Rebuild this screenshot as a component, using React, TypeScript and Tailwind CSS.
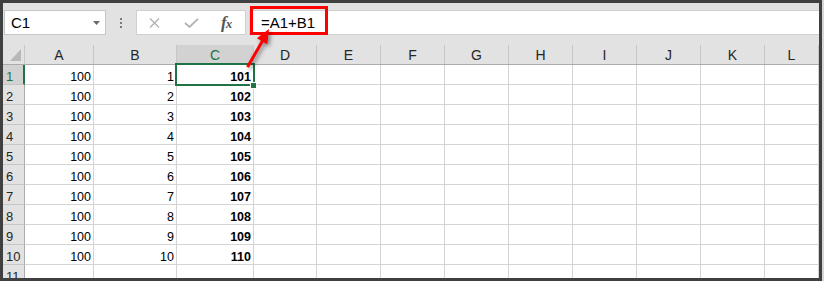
import React from 'react';

const cols = [
  { key: 'A', w: 'w-[69px]' },
  { key: 'B', w: 'w-[83px]' },
  { key: 'C', w: 'w-[77px]' },
  { key: 'D', w: 'w-[63px]' },
  { key: 'E', w: 'w-[64px]' },
  { key: 'F', w: 'w-[64px]' },
  { key: 'G', w: 'w-[64px]' },
  { key: 'H', w: 'w-[64px]' },
  { key: 'I', w: 'w-[64px]' },
  { key: 'J', w: 'w-[64px]' },
  { key: 'K', w: 'w-[64px]' },
  { key: 'L', w: 'flex-1' },
];

const font = "font-['Liberation_Sans',Arial,sans-serif]";

const cellValue = (row: number, col: string) => {
  if (row > 10) return '';
  if (col === 'A') return '100';
  if (col === 'B') return String(row);
  if (col === 'C') return String(100 + row);
  return '';
};

const App = () => {
  const rows = Array.from({ length: 11 }, (_, i) => i + 1);

  return (
    <div className={`flex w-[824px] h-[281px] bg-[#d6d6d6] ${font}`}>
      <div className="relative flex flex-col w-[822px] h-[281px] border-[3px] border-[#404040] bg-[#e2e2e2] overflow-hidden">
        {/* Formula bar */}
        <div className="flex items-end h-[32px] shrink-0 pl-px">
          <div className="flex items-center justify-between w-[102px] h-[25px] bg-white border border-[#c6c6c6] pl-[6px] pr-[5px]">
            <span className="text-[15px] text-black leading-none">C1</span>
            <svg width="7" height="4" viewBox="0 0 7 4">
              <polygon points="0,0 7,0 3.5,4" fill="#6a6a6a" />
            </svg>
          </div>
          <div className="flex flex-col items-center justify-center gap-[2px] w-[30px] h-[25px]">
            <span className="w-[2px] h-[2px] bg-[#7a7a7a]" />
            <span className="w-[2px] h-[2px] bg-[#7a7a7a]" />
            <span className="w-[2px] h-[2px] bg-[#7a7a7a]" />
          </div>
          <div className="flex items-center w-[110px] h-[25px] bg-white border border-[#d0d0d0] pl-[12px]">
            <svg width="11" height="10" viewBox="0 0 11 10">
              <path d="M1 0.5 L10 9.5 M10 0.5 L1 9.5" stroke="#b3b3b3" strokeWidth="1.4" fill="none" />
            </svg>
            <svg className="ml-[24px]" width="15" height="10" viewBox="0 0 15 10">
              <path d="M1 5 L5.5 9 L14 0.8" stroke="#b3b3b3" strokeWidth="1.8" fill="none" />
            </svg>
            <span className="ml-[22px] text-[17px] leading-none italic font-bold text-[#555555] font-['Liberation_Serif',serif] tracking-[-1px]">
              f<span className="text-[13px]">x</span>
            </span>
          </div>
          <div className="flex items-center flex-1 h-[25px] ml-[3px] bg-white border border-[#d0d0d0] border-r-0 pl-[11px]">
            <span className="text-[15px] text-black leading-none">=A1+B1</span>
          </div>
        </div>

        <div className="h-[10px] shrink-0" />

        {/* Column headers */}
        <div className="flex h-[20px] shrink-0 border-b border-[#ababab]">
          <div className="w-[22px] h-full border-r border-[#c6c6c6]">
            <svg width="21" height="19" viewBox="0 0 21 19">
              <polygon points="18,4 18,16 7,16" fill="#b8b8b8" />
            </svg>
          </div>
          {cols.map((c) => (
            <div
              key={c.key}
              className={`${c.w} h-full border-r border-[#c6c6c6] pt-px text-center text-[14px] leading-[18px] ${
                c.key === 'C' ? 'bg-[#d2d2d2] text-[#217346]' : 'text-[#262626]'
              }`}
            >
              {c.key}
            </div>
          ))}
        </div>

        {/* Rows */}
        {rows.map((r) => (
          <div key={r} className="flex h-[20px] shrink-0">
            <div
              className={`flex items-end w-[22px] h-full border-b border-[#c6c6c6] pl-[3px] text-[13px] leading-[15px] ${
                r === 1
                  ? 'bg-[#d2d2d2] text-[#217346] border-r-2 border-r-[#217346]'
                  : 'bg-[#e2e2e2] text-[#262626] border-r border-r-[#ababab]'
              }`}
            >
              {r}
            </div>
            {cols.map((c) => (
              <div
                key={c.key}
                className={`flex items-end justify-end ${c.w} h-full bg-white border-r border-b border-[#d4d4d4] pr-[2px] text-[12.5px] leading-[14px] text-black ${
                  c.key === 'C' ? 'font-bold' : ''
                }`}
              >
                {cellValue(r, c.key)}
              </div>
            ))}
          </div>
        ))}

        {/* Active cell selection */}
        <div className="absolute left-[172px] top-[60px] w-[80px] h-[23px] border-2 border-[#217346]" />
        <div className="absolute left-[247px] top-[79px] w-[7px] h-[7px] bg-[#217346] border border-white" />

        {/* Annotation: red box and arrow */}
        <div className="absolute left-[247px] top-[3px] w-[78px] h-[29px] border-[3px] border-[#ff0000]" />
        <svg
          className="absolute inset-0 pointer-events-none drop-shadow-[2px_2px_2px_rgba(0,0,0,0.45)]"
          width="816"
          height="275"
          viewBox="3 3 816 275"
        >
          <line x1="247.5" y1="67" x2="263" y2="40" stroke="#ff0000" strokeWidth="3" />
          <polygon points="269,29 267.3,44.2 256.9,38.3" fill="#ff0000" />
        </svg>
      </div>
    </div>
  );
};

export default App;
